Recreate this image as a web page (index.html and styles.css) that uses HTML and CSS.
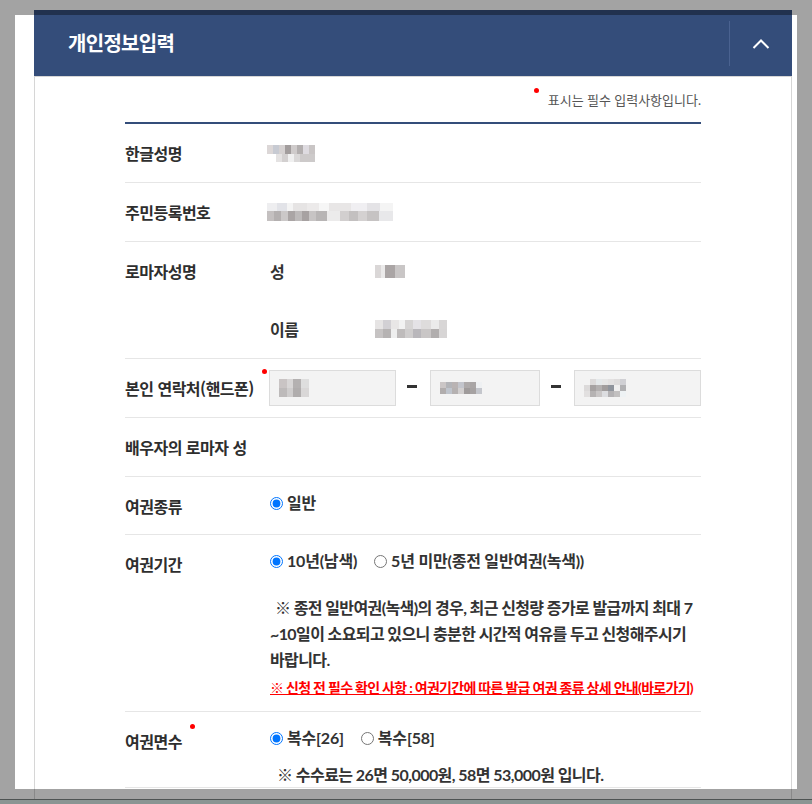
FILE: index.html
```html
<!DOCTYPE html>
<html lang="ko">
<head>
<meta charset="utf-8">
<title>개인정보입력</title>
<link rel="stylesheet" href="styles.css">
</head>
<body>
<div class="page">
  <section class="card">
    <header class="card-head">
      <h2 class="card-title">개인정보입력</h2>
      <button class="toggle" type="button" aria-label="접기">
        <svg width="18" height="10" viewBox="0 0 18 10"><polyline points="1.5,9 9,1.5 16.5,9" fill="none" stroke="#fff" stroke-width="2"/></svg>
      </button>
    </header>
    <div class="card-body">
      <p class="req-note"><span class="dot dot-note"></span>표시는 필수 입력사항입니다.</p>
      <div class="form">
        <div class="row">
          <div class="label">한글성명</div>
          <div class="value"><span class="mz mz-kname"></span></div>
        </div>
        <div class="row">
          <div class="label">주민등록번호</div>
          <div class="value"><span class="mz mz-rrn"></span></div>
        </div>
        <div class="row">
          <div class="label">로마자성명</div>
          <div class="value value-stack">
            <div class="sub"><span class="sub-label">성</span><span class="mz mz-sur"></span></div>
            <div class="sub"><span class="sub-label">이름</span><span class="mz mz-given"></span></div>
          </div>
        </div>
        <div class="row">
          <div class="label">본인 연락처(핸드폰)<span class="dot dot-label"></span></div>
          <div class="value value-tel">
            <div class="tel tel-wide"><span class="mz mz-t1"></span></div>
            <span class="dash"></span>
            <div class="tel tel-mid"><span class="mz mz-t2"></span></div>
            <span class="dash"></span>
            <div class="tel tel-wide tel-last"><span class="mz mz-t3"></span></div>
          </div>
        </div>
        <div class="row">
          <div class="label">배우자의 로마자 성</div>
          <div class="value"></div>
        </div>
        <div class="row row-short">
          <div class="label">여권종류</div>
          <div class="value value-opts">
            <label class="opt"><input type="radio" name="kind" checked>일반</label>
          </div>
        </div>
        <div class="row">
          <div class="label">여권기간</div>
          <div class="value value-opts value-period">
            <div class="opt-line">
              <label class="opt"><input type="radio" name="period" checked>10년(남색)</label>
              <label class="opt"><input type="radio" name="period">5년 미만(종전 일반여권(녹색))</label>
            </div>
            <p class="notice">※ 종전 일반여권(녹색)의 경우, 최근 신청량 증가로 발급까지 최대 7<br>~10일이 소요되고 있으니 충분한 시간적 여유를 두고 신청해주시기<br>바랍니다.</p>
            <p class="notice-link"><a href="#">※ 신청 전 필수 확인 사항 : 여권기간에 따른 발급 여권 종류 상세 안내(바로가기)</a></p>
          </div>
        </div>
        <div class="row">
          <div class="label">여권면수<span class="dot dot-label dot-pages"></span></div>
          <div class="value value-opts value-pages">
            <div class="opt-line">
              <label class="opt"><input type="radio" name="pages" checked>복수[26]</label>
              <label class="opt"><input type="radio" name="pages">복수[58]</label>
            </div>
            <p class="fee">※ 수수료는 26면 50,000원, 58면 53,000원 입니다.</p>
          </div>
        </div>
      </div>
    </div>
  </section>
</div>
<div class="footer-strip"></div>
<div class="spotlight"></div>
</body>
</html>
```
FILE: styles.css
```css
* { box-sizing: border-box; }

body {
  margin: 0;
  background: #fff;
  font-family: Lato, "Noto Sans CJK KR", sans-serif;
  color: #333;
  overflow: hidden;
}

.page {
  padding: 10px 0 0 34px;
}

.card {
  width: 758px;
}

.card-head {
  display: flex;
  align-items: center;
  height: 66px;
  background: #344d7a;
  padding-left: 34px;
}

.card-title {
  margin: 0;
  font-size: 20px;
  font-weight: 700;
  line-height: 24px;
  letter-spacing: -0.7px;
  color: #fff;
}

.toggle {
  align-self: stretch;
  margin: 11px 0 10px auto;
  width: 63px;
  padding: 0;
  border: 0;
  border-left: 1px solid #4a6290;
  background: none;
  display: flex;
  align-items: center;
  justify-content: center;
}

.toggle svg { display: block; }

.card-body {
  border: 1px solid #d6d6d6;
  border-bottom: 0;
  padding: 0 90px 11px;
}

.req-note {
  margin: 0;
  padding: 13px 0 12px;
  text-align: right;
  font-size: 13px;
  line-height: 20px;
  letter-spacing: 0;
  color: #555;
}

.dot {
  display: inline-block;
  width: 5px;
  height: 5px;
  border-radius: 50%;
  background: #f00;
  vertical-align: top;
}

.dot-note { margin: -2px 9px 0 0; }
.dot-label { margin: -7px 0 0 8px; }
.dot-pages { margin: -5px 0 0 8px; }

.form {
  border-top: 2px solid #344d7a;
}

.row {
  display: flex;
  border-bottom: 1px solid #e6e6e6;
}

.label {
  flex: none;
  width: 142px;
  padding: 17px 0;
  font-family: "Noto Sans CJK KR", sans-serif;
  font-size: 16px;
  font-weight: 700;
  line-height: 24px;
  letter-spacing: -0.5px;
  white-space: nowrap;
  color: #2e2e2e;
}

.value {
  flex: 1;
  display: flex;
  align-items: center;
  padding: 17px 0;
  font-size: 16px;
  font-weight: 700;
  line-height: 24px;
  letter-spacing: -0.2px;
}

.value-stack {
  display: block;
  padding: 0;
}

.sub {
  display: flex;
  align-items: center;
  height: 58px;
  padding-left: 3px;
}

.sub-label {
  width: 105px;
  font-family: "Noto Sans CJK KR", sans-serif;
  font-size: 16px;
  letter-spacing: -0.5px;
}

.value-tel {
  padding: 11px 0;
}

.tel {
  flex: none;
  display: flex;
  align-items: center;
  height: 36px;
  border: 1px solid #dcdcdc;
  background: #f3f3f3;
}

.tel-wide { width: 127px; }
.tel-mid { width: 110px; }
.tel-wide:first-child { margin-left: 2px; }

.dash {
  flex: none;
  width: 10px;
  height: 3px;
  margin: 0 13px 4px 11px;
  background: #333;
}

.value-opts {
  padding: 14px 0 20px;
}

.row-short .label { padding-bottom: 16px; }
.row-short .value { padding-bottom: 19px; }

.value-period,
.value-pages {
  display: block;
}

.value-period { padding-bottom: 13px; }
.value-pages { padding-bottom: 1px; }

.opt-line {
  display: flex;
  align-items: center;
  height: 24px;
}

.opt {
  display: inline-flex;
  align-items: center;
  margin-right: 14px;
  cursor: pointer;
}

.opt input {
  width: 13px;
  height: 13px;
  margin: 0 4px 0 3px;
}

.notice {
  margin: 22px 0 0;
  padding-left: 3px;
  text-indent: 5px;
  font-size: 16px;
  line-height: 26px;
  letter-spacing: -0.6px;
  white-space: nowrap;
}

.notice-link {
  margin: 5px 0 0;
  padding-left: 3px;
  font-size: 14px;
  line-height: 20px;
  letter-spacing: -0.7px;
  white-space: nowrap;
}

.notice-link a {
  color: #f00;
  text-decoration: underline;
}

.fee {
  margin: 14px 0 0;
  padding-left: 10px;
  font-size: 16px;
  line-height: 22px;
  letter-spacing: -0.55px;
  white-space: nowrap;
}

/* pixelated (masked) values */
.mz {
  display: block;
  flex: none;
  background-repeat: no-repeat;
}

.mz-kname {
  width: 48px;
  height: 17px;
  background-image:
    linear-gradient(90deg, #dcd7d7 0 6px, #c7cad2 6px 12px, #d5d1d1 12px 18px, #a29d9d 18px 24px, #cfcbcb 24px 30px, #b3afaf 30px 36px, #dedbe0 36px 42px, #c9c5c5 42px 48px),
    linear-gradient(90deg, #fff 0 9px, #e4e2e2 9px 15px, #d3d0d0 15px 21px, #f0f0f0 21px 27px, #dad8d8 27px 33px, #cdcaca 33px 48px);
  background-size: 100% 9px, 100% 8px;
  background-position: top, bottom;
}

.mz-rrn {
  width: 126px;
  height: 18px;
  background-image:
    linear-gradient(90deg, #eeeef0 0 10px, #e2e3e8 10px 20px, #f4f4f4 20px 26px, #e6e4e4 26px 40px, #eceaea 40px 52px, #f6f6f6 52px 62px, #e8e6e6 62px 84px, #f0eff2 84px 100px, #e4e3e6 100px 113px, #f4f4f4 113px 126px),
    linear-gradient(90deg, #c4c0c0 0 7px, #b4b0b0 7px 14px, #cbc8c8 14px 21px, #aaa5a5 21px 28px, #bdbaba 28px 35px, #a7a2a2 35px 42px, #c7c4c4 42px 49px, #b8b5b5 49px 60px, #ecebeb 60px 73px, #d2cfcf 73px 82px, #c3c0c0 82px 91px, #d4d1d1 91px 100px, #c6c3c3 100px 112px, #e8e8ea 112px 126px);
  background-size: 100% 8px, 100% 10px;
  background-position: top, bottom;
}

.mz-sur {
  width: 30px;
  height: 13px;
  background-image: linear-gradient(90deg, #dad7d7 0 6px, #ebeaea 6px 10px, #aaa5a5 10px 20px, #c9c6c6 20px 30px);
}

.mz-given {
  width: 72px;
  height: 18px;
  background-image:
    linear-gradient(90deg, #e6e4e4 0 8px, #d2d0d4 8px 16px, #e8e6e6 16px 24px, #f2f2f2 24px 30px, #d6d4d4 30px 38px, #e4e2e6 38px 46px, #dedcdc 46px 56px, #ebebeb 56px 64px, #d8d6d6 64px 72px),
    linear-gradient(90deg, #c6c3c3 0 8px, #b6b3b3 8px 16px, #eeeeee 16px 22px, #bebbbb 22px 30px, #cfcdcd 30px 38px, #b9b7bb 38px 46px, #c9c6c6 46px 56px, #b1aeae 56px 64px, #d7d5d5 64px 72px);
  background-size: 100% 9px, 100% 9px;
  background-position: top, bottom;
}

.tel .mz { margin-left: 9px; }

.mz-t1 {
  width: 30px;
  height: 18px;
  background-image:
    linear-gradient(90deg, #c9c4c4 0 8px, #d8d6d6 8px 14px, #b4b1b1 14px 22px, #dedede 22px 30px),
    linear-gradient(90deg, #bdbaba 0 8px, #cfcdcd 8px 14px, #b0adad 14px 22px, #d9d7d7 22px 30px);
  background-size: 100% 9px, 100% 9px;
  background-position: top, bottom;
}

.mz-t2 {
  width: 42px;
  height: 12px;
  background-image:
    linear-gradient(90deg, #cbc6c6 0 6px, #b3b4b8 6px 12px, #b9b3b3 12px 18px, #c3c5cc 18px 24px, #aeaaaa 24px 30px, #a9a5a5 30px 36px, #eef0f2 36px 42px),
    linear-gradient(90deg, #b1adad 0 6px, #bfc4cc 6px 12px, #b5b1b1 12px 18px, #d2cfcf 18px 24px, #9f9b9b 24px 30px, #a6a2a2 30px 36px, #c4c6cc 36px 42px);
  background-size: 100% 6px, 100% 6px;
  background-position: top, bottom;
}

.mz-t3 {
  width: 42px;
  height: 18px;
  margin-left: 7px;
  background-image:
    linear-gradient(90deg, #f3f3f3 0 6px, #dcdada 6px 12px, #e4e8ea 12px 18px, #e6e6e6 18px 24px, #e3e1e1 24px 30px, #dedcdc 30px 36px, #d0d0d4 36px 42px),
    linear-gradient(90deg, #dcdada 0 6px, #a6a2a2 6px 12px, #b3b0b0 12px 18px, #a19d9d 18px 24px, #8f949c 24px 30px, #f0efef 30px 36px, #b1b1b3 36px 42px),
    linear-gradient(90deg, #e2e0e0 0 6px, #b6b3b3 6px 12px, #c9c6c6 12px 18px, #dcdde0 18px 24px, #b4b2b4 24px 30px, #c2c0c0 30px 36px, #eef2f4 36px 42px);
  background-size: 100% 6px, 100% 6px, 100% 6px;
  background-position: top, center, bottom;
}

.footer-strip {
  height: 30px;
  border-top: 1px solid #7a8381;
  background: #d8eae6;
}

.spotlight {
  position: fixed;
  left: 15px;
  top: 15px;
  width: 782px;
  height: 774px;
  box-shadow: 0 0 0 1200px rgba(0, 0, 0, 0.36);
  pointer-events: none;
}
```
